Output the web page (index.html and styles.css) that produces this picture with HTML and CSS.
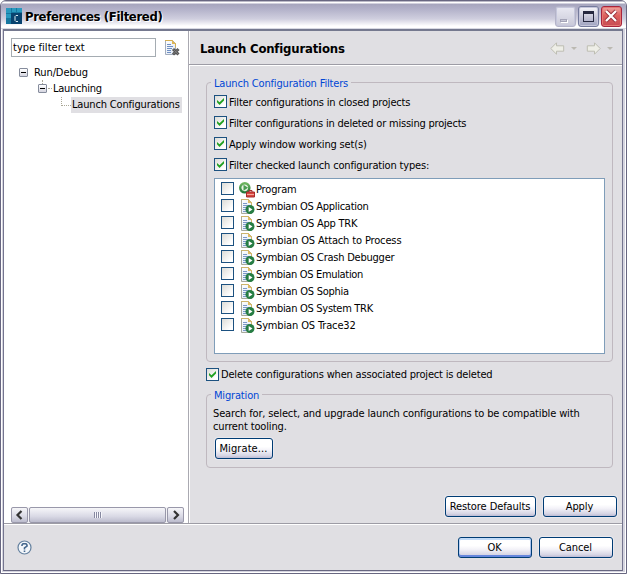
FILE: index.html
```html
<!DOCTYPE html>
<html lang="en">
<head>
<meta charset="utf-8">
<title>Preferences (Filtered)</title>
<link rel="stylesheet" href="styles.css">
</head>
<body>
<svg width="0" height="0" class="defs">
  <defs>
    <linearGradient id="paper" x1="0" y1="0" x2="1" y2="1"><stop offset="0" stop-color="#ffffff"/><stop offset="1" stop-color="#dce6f4"/></linearGradient>
    <linearGradient id="green" x1="0" y1="0" x2="0" y2="1"><stop offset="0" stop-color="#6fb65f"/><stop offset="1" stop-color="#237a3b"/></linearGradient>
    <symbol id="launch" viewBox="0 0 16 16">
      <path d="M1.5.5h7l3 3v11h-10z" fill="url(#paper)" stroke="#a7a99b"/>
      <path d="M1 .5h7.5v3h3v4" fill="none" stroke="#cdb46c"/><path d="M8 0l4 4H8z" fill="#e0bb60"/>
      <path d="M3 4.5h4M3 6.5h6M3 8.5h4M3 10.5h3M3 12.5h3" stroke="#7b98c8"/>
      <circle cx="10" cy="10.5" r="4.5" fill="#267d43"/><path d="M8.7 8l3.8 2.5L8.7 13z" fill="#fff"/>
    </symbol>
    <symbol id="arrow" viewBox="0 0 15 13">
      <path d="M.8 6.5L6.5.8v3h7.2v5.4H6.5v3z" fill="#eeeee7" stroke="#bdbdb2"/>
    </symbol>
  </defs>
</svg>
<div class="window">
  <header class="titlebar">
    <svg class="app" width="16" height="16"><path d="M0 0h16v16H0z" fill="#1677a0"/><path d="M0 0h5v5H0zM6 0h4v4H6zM11 0h5v4h-5zM0 6h5v4H0z" fill="#2999bf"/><path d="M5 5h11v11H5z" fill="#08426f"/><path d="M12 7.5h-2l-1 1v4l1 1h2" fill="none" stroke="#d9e9f1"/></svg>
    <h1>Preferences (Filtered)</h1>
    <span class="cap min"><i></i></span><span class="cap max"><i></i></span>
    <span class="cap close"><svg width="21" height="21"><path d="M5 5l10 10M15 5L5 15" stroke="#9a333e" stroke-width="4"/><path d="M5 5l10 10M15 5L5 15" stroke="#fff" stroke-width="2.2"/></svg></span>
  </header>
  <main class="client">
    <div class="upper">
      <aside class="side">
        <div class="search"><div class="input">type filter text</div>
          <svg width="16" height="16"><path d="M1.5.5h7l3 3v11h-10z" fill="url(#paper)" stroke="#a3adbd"/><path d="M1 .5h7.5v3h3v4" fill="none" stroke="#d5ae51"/><path d="M8 0l4 4H8z" fill="#dfb755"/><path d="M3 4.5h4M3 6.5h6M3 8.5h5M3 10.5h4M3 12.5h4" stroke="#6f8fc3"/><path d="M9 9l5.5 5.500M14.500 9L9 14.500" stroke="#555" stroke-width="3"/><path d="M9.500 9.500l4.500 4.500M14 9.500L9.500 14" stroke="#888" stroke-width=".8"/></svg>
        </div>
        <div class="tree">
          <div class="node n1"><b class="twist"></b><span class="t-run">Run/Debug</span></div>
          <div class="node n2"><b class="twist"></b><span class="t-launching">Launching</span></div>
          <div class="node n3"><u></u><span class="sel">Launch Configurations</span></div>
        </div>
        <div class="scroll">
          <span class="sb"><svg width="16" height="14"><path d="M9.500 3L5.500 7l4 4" fill="none" stroke="#333" stroke-width="2.200"/></svg></span>
          <span class="thumb"><i></i></span>
          <span class="sb"><svg width="16" height="14"><path d="M6 3l4 4-4 4" fill="none" stroke="#333" stroke-width="2.200"/></svg></span>
        </div>
      </aside>
      <section class="page">
        <div class="head"><h2>Launch Configurations</h2>
          <svg width="63" height="13"><use href="#arrow" width="15" height="13"/><path d="M21 5h6l-3 3z" fill="#bbb9b2"/><use href="#arrow" width="15" height="13" transform="translate(51 0) scale(-1 1)"/><path d="M57 5h6l-3 3z" fill="#bbb9b2"/></svg>
        </div>
        <div class="content">
          <div class="group filters"><span class="legend l1">Launch Configuration Filters</span>
            <div class="check on"><i></i><span class="c1">Filter configurations in closed projects</span></div>
            <div class="check on"><i></i><span class="c2">Filter configurations in deleted or missing projects</span></div>
            <div class="check on"><i></i><span class="c3">Apply window working set(s)</span></div>
            <div class="check on"><i></i><span class="c4">Filter checked launch configuration types:</span></div>
            <div class="list">
              <div class="row"><i></i><svg class="prog" width="17" height="16"><circle cx="5.800" cy="5.800" r="4.600" fill="#e9f3e2" stroke="url(#green)" stroke-width="2.400"/><path d="M4.500 2.800l4.600 3-4.600 3z" fill="#4b9d51"/><path d="M7.500 10h8v5h-8z" fill="#d8453f" stroke="#a52c2c"/><path d="M10 10V8.500h3V10" fill="none" stroke="#a52c2c"/><path d="M8 12.500h7" stroke="#f3a499"/></svg><span class="r0">Program</span></div>
              <div class="row"><i></i><svg width="16" height="16"><use href="#launch"/></svg><span class="r1">Symbian OS Application</span></div>
              <div class="row"><i></i><svg width="16" height="16"><use href="#launch"/></svg><span class="r2">Symbian OS App TRK</span></div>
              <div class="row"><i></i><svg width="16" height="16"><use href="#launch"/></svg><span class="r3">Symbian OS Attach to Process</span></div>
              <div class="row"><i></i><svg width="16" height="16"><use href="#launch"/></svg><span class="r4">Symbian OS Crash Debugger</span></div>
              <div class="row"><i></i><svg width="16" height="16"><use href="#launch"/></svg><span class="r5">Symbian OS Emulation</span></div>
              <div class="row"><i></i><svg width="16" height="16"><use href="#launch"/></svg><span class="r6">Symbian OS Sophia</span></div>
              <div class="row"><i></i><svg width="16" height="16"><use href="#launch"/></svg><span class="r7">Symbian OS System TRK</span></div>
              <div class="row"><i></i><svg width="16" height="16"><use href="#launch"/></svg><span class="r8">Symbian OS Trace32</span></div>
            </div>
          </div>
          <div class="check on delete"><i></i><span class="c5">Delete configurations when associated project is deleted</span></div>
          <div class="group migration"><span class="legend l2">Migration</span>
            <p><span class="p1">Search for, select, and upgrade launch configurations to be compatible with</span><br><span class="p2">current tooling.</span></p>
            <button class="b-mig">Migrate...</button>
          </div>
          <div class="actions"><button class="b-restore">Restore Defaults</button><button class="b-apply">Apply</button></div>
        </div>
      </section>
    </div>
    <footer class="foot">
      <svg width="15" height="15"><circle cx="7.500" cy="7.500" r="6.500" fill="#f3f6fa" stroke="#64809f" stroke-width="1.200"/><path d="M5 6V5l1-1.300h3L10 5v1L7.500 8v1.500M7.500 10.500V12" fill="none" stroke="#45678d" stroke-width="1.600"/></svg>
      <button class="b-ok default">OK</button><button class="b-cancel">Cancel</button>
    </footer>
  </main>
</div>
</body>
</html>
```
FILE: styles.css
```css
* { box-sizing: border-box; }
body { margin: 0; width: 627px; height: 574px; overflow: hidden; background: #fff; color: #000; font: 11px/13px "DejaVu Sans Condensed", "DejaVu Sans", sans-serif; font-stretch: condensed; letter-spacing: -.17px; }
h1, h2, p { margin: 0; }
svg { display: block; flex: none; }
span { white-space: nowrap; }
.defs { position: absolute; }
.window { width: 627px; height: 574px; padding: 0 3px 2px 2px; border: 1px solid #686781; border-radius: 6px 6px 0 0; background: #d5d4df; box-shadow: inset 1px 1px #fff, inset -1px -1px #fff; }
.titlebar { height: 28px; margin: 0 -3px 0 -2px; display: flex; align-items: flex-start; padding: 5px 4px 0 5px; border-radius: 5px 5px 0 0; background: linear-gradient(#77758f 0, #fff 1px, #fff 2px, #a6a5bd 3px, #b2b1c9 8px, #d0cfdf 18px, #fff 25px, #fff 27px, #b1b4c7 28px); }
.app { margin-top: 2px; }
h1 { flex: 1; margin: 3px 0 0 3px; font-size: 13px; line-height: 16px; letter-spacing: -.37px; text-shadow: 1px 1px #fff; }
.cap { width: 21px; height: 21px; margin-left: 2px; border: 1px solid #747a9c; border-radius: 3px; background: linear-gradient(#f8f8fb, #c5c5d7 55%, #9fa3c0); box-shadow: inset 0 0 0 1px #c5c6db; }
.min { border-color: #b4b4c8; background: linear-gradient(#e9e9f2, #c9c9d8); }
.min i { display: block; width: 7px; height: 3px; margin: 12px 0 0 4px; background: #c8c8d6; border: 1px solid #a4a4b7; box-shadow: 1px 1px #fff; }
.max i { display: block; width: 11px; height: 11px; margin: 4px; border: 1px solid #26283f; border-top-width: 3px; }
.close { border-color: #a8243d; background: linear-gradient(#eda4a1, #df615d 45%, #c74b54); box-shadow: inset 0 0 0 1px #e47872; }
.close svg { margin: -1px; }
.client { height: 542px; border: 1px solid #74758f; border-top: 2px solid #75798f; border-bottom-color: #686781; background: #e0dfe3; }
.upper { height: 493px; display: flex; border-bottom: 1px solid #9d9ca5; }
.side { width: 184px; background: #fff; display: flex; flex-direction: column; padding: 7px 3px 0 7px; }
.search { display: flex; gap: 8px; align-items: center; }
.input { width: 145px; height: 19px; border: 1px solid #a5acb2; padding: 2px 0 0 1px; line-height: 13px; letter-spacing: .05px; }
.tree { margin-top: 8px; flex: 1; }
.node { height: 16px; line-height: 16px; display: flex; align-items: center; }
.n1 { padding-left: 8px; } .n2 { padding-left: 27px; } .n3 { padding-left: 50px; }
.twist { position: relative; width: 9px; height: 9px; margin: 0 6px 1px 0; border: 1px solid #858c9c; border-radius: 1px; background: linear-gradient(#000,#000) center/5px 1px no-repeat, linear-gradient(#fff, #d5d5e0); }
.n2 .twist::before { content: ""; position: absolute; left: 3px; top: -5px; height: 4px; border-left: 1px dotted #aaa897; }
.n2 .twist::after { content: ""; position: absolute; left: 9px; top: 3px; width: 4px; border-top: 1px dotted #aaa897; }
.n3 u { width: 10px; height: 9px; margin-top: -7px; border: 1px dotted #aaa897; border-width: 0 0 1px 1px; }
.t-run { letter-spacing: -.1px; }
.t-launching { letter-spacing: -.25px; }
.sel { background: #e0dfe3; padding: 0 2px 0 1px; }
.scroll { height: 16px; width: 173px; display: flex; gap: 1px; background: #f2f2f5; }
.sb, .thumb { border: 1px solid #9998aa; border-radius: 2px; background: linear-gradient(#f6f6f9, #d9d9e5 60%, #bcbccd); }
.sb { width: 17px; }
.thumb { flex: 1; display: flex; align-items: center; justify-content: center; }
.thumb i { width: 8px; height: 6px; background: repeating-linear-gradient(90deg, #8789a0 0 1px, #f6f6fb 1px 2px); }
.page { flex: 1; border-left: 1px solid #aaa9b1; box-shadow: inset 1px 0 #fff; }
.head { height: 34px; padding: 1px 9px 0 11px; display: flex; align-items: center; justify-content: space-between; border-bottom: 1px solid #9d9ca5; box-shadow: 0 1px #fff; }
h2 { font-size: 13px; line-height: 17px; letter-spacing: -.19px; }
.content { padding: 17px 5px 0 17px; }
.group { position: relative; width: 407px; border: 1px solid #bfb8bf; border-radius: 4px; padding-left: 7px; }
.filters { height: 280px; padding-top: 9px; }
.legend { position: absolute; top: -6px; left: 4px; padding: 0 3px; color: #0046d5; background: #e0dfe3; }
.check { height: 21px; display: flex; align-items: center; gap: 2px; }
.check i, .row i { width: 13px; height: 13px; flex: none; border: 1px solid #1c5180; background: linear-gradient(135deg, #dcdcd7, #fff 80%); }
.filters i { margin-bottom: 2px; }
.on i::after { content: ""; display: block; width: 7px; height: 7px; margin: 2px; background: #21a121; clip-path: polygon(0 28%, 0 62%, 36% 100%, 100% 36%, 100% 0, 36% 62%); }
.list { width: 391px; height: 176px; margin-top: 2px; padding: 2px 6px; border: 1px solid #7f9db9; background: #fff; }
.row { height: 17px; display: flex; align-items: center; }
.row svg { margin-left: 6px; }
.row .prog { margin: 0 0 0 5px; }
.c2 { letter-spacing: -.21px; }
.c5 { letter-spacing: -.18px; }
.p1, .p2 { letter-spacing: -.14px; }
.r1, .r7 { letter-spacing: -.29px; }
.r2, .r4 { letter-spacing: -.23px; }
.r3, .r8 { letter-spacing: -.14px; }
.r5 { letter-spacing: -.32px; }
.r6 { letter-spacing: -.26px; }
.delete { margin-top: 2px; }
.delete + .group { margin-top: 9px; }
.migration { height: 74px; padding-top: 12px; }
.migration p { margin-left: -1px; }
button { height: 21px; padding: 0 1px 0 0; color: #000; font: inherit; letter-spacing: -.08px; border: 1px solid #003c74; border-radius: 3px; background: linear-gradient(#fff 0 40%, #f3f2f8 60%, #d7d6e5 87%, #bdbbd4); box-shadow: 0 0 0 1px #e9e8ed; }
.b-mig { display: block; width: 58px; margin: 5px 0 0 1px; letter-spacing: .1px; }
.actions { display: flex; justify-content: flex-end; gap: 7px; margin-top: 28px; }
.b-restore { width: 91px; } .b-apply { width: 74px; }
.foot { height: 46px; border-top: 1px solid #fff; display: flex; align-items: center; padding: 0 9px 0 13px; gap: 7px; }
.foot svg { margin-right: auto; }
.foot button { width: 74px; }
.default { box-shadow: inset 0 2px #c2dbf8, inset 0 -2px #6687dd, inset 1px 0 #bdd2f3, inset -1px 0 #aac2ed; }
```
